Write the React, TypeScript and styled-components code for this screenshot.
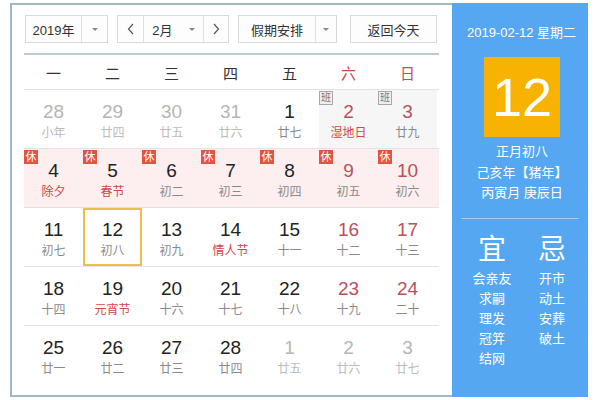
import React from "react"
import styled, { createGlobalStyle, css } from "styled-components"

const GlobalStyle = createGlobalStyle`
  html, body {
    margin: 0;
    padding: 0;
    background: #ffffff;
  }
  body {
    font-family: "Liberation Sans", "Noto Sans CJK SC", sans-serif;
    color: #333;
  }
`

type Tone = "normal" | "faded" | "weekend"
type Mark = "xiu" | "ban" | undefined

interface Day {
  n: number
  lunar: string
  tone?: Tone
  fest?: boolean
  mark?: Mark
  today?: boolean
}

const weeks: Array<Array<Day>> = [
  [
    { n: 28, lunar: "小年", tone: "faded" },
    { n: 29, lunar: "廿四", tone: "faded" },
    { n: 30, lunar: "廿五", tone: "faded" },
    { n: 31, lunar: "廿六", tone: "faded" },
    { n: 1, lunar: "廿七" },
    { n: 2, lunar: "湿地日", tone: "weekend", fest: true, mark: "ban" },
    { n: 3, lunar: "廿九", tone: "weekend", mark: "ban" }
  ],
  [
    { n: 4, lunar: "除夕", fest: true, mark: "xiu" },
    { n: 5, lunar: "春节", fest: true, mark: "xiu" },
    { n: 6, lunar: "初二", mark: "xiu" },
    { n: 7, lunar: "初三", mark: "xiu" },
    { n: 8, lunar: "初四", mark: "xiu" },
    { n: 9, lunar: "初五", tone: "weekend", mark: "xiu" },
    { n: 10, lunar: "初六", tone: "weekend", mark: "xiu" }
  ],
  [
    { n: 11, lunar: "初七" },
    { n: 12, lunar: "初八", today: true },
    { n: 13, lunar: "初九" },
    { n: 14, lunar: "情人节", fest: true },
    { n: 15, lunar: "十一" },
    { n: 16, lunar: "十二", tone: "weekend" },
    { n: 17, lunar: "十三", tone: "weekend" }
  ],
  [
    { n: 18, lunar: "十四" },
    { n: 19, lunar: "元宵节", fest: true },
    { n: 20, lunar: "十六" },
    { n: 21, lunar: "十七" },
    { n: 22, lunar: "十八" },
    { n: 23, lunar: "十九", tone: "weekend" },
    { n: 24, lunar: "二十", tone: "weekend" }
  ],
  [
    { n: 25, lunar: "廿一" },
    { n: 26, lunar: "廿二" },
    { n: 27, lunar: "廿三" },
    { n: 28, lunar: "廿四" },
    { n: 1, lunar: "廿五", tone: "faded" },
    { n: 2, lunar: "廿六", tone: "faded" },
    { n: 3, lunar: "廿七", tone: "faded" }
  ]
]

const weekdays = ["一", "二", "三", "四", "五", "六", "日"]
const yi = ["会亲友", "求嗣", "理发", "冠笄", "结网"]
const ji = ["开市", "动土", "安葬", "破土"]

const Frame = styled.div`
  box-sizing: border-box;
  margin: 3px 0 0 10px;
  width: 578px;
  height: 394px;
  border: 2px solid #a3b6c3;
  border-right: none;
  display: flex;
`

const Main = styled.div`
  flex: 1;
  padding: 10px 13px 0 12px;
  display: flex;
  flex-direction: column;
`

const Toolbar = styled.div`
  display: flex;
  height: 28px;
  padding-left: 1px;
`

const Box = styled.div<{ $w: number; $gap?: number }>`
  box-sizing: border-box;
  width: ${p => p.$w}px;
  margin-right: ${p => p.$gap ?? 0}px;
  height: 28px;
  border: 1px solid #d9d9d9;
  background: #fdfdfd;
  display: flex;
  align-items: stretch;
  font-size: 13px;
  color: #333;
`

const Part = styled.div<{ $w?: number; $line?: boolean }>`
  ${p =>
    p.$w
      ? css`
          width: ${p.$w}px;
          flex: none;
        `
      : css`
          flex: 1;
        `}
  display: flex;
  align-items: center;
  justify-content: center;
  border-left: ${p => (p.$line ? "1px solid #e0e0e0" : "none")};
`

const Caret = styled.span`
  width: 0;
  height: 0;
  border-left: 3px solid transparent;
  border-right: 3px solid transparent;
  border-top: 3px solid #888;
`

const Button = styled.div`
  box-sizing: border-box;
  width: 87px;
  height: 28px;
  border: 1px solid #d9d9d9;
  background: #fdfdfd;
  display: flex;
  align-items: center;
  justify-content: center;
  font-size: 13px;
  color: #333;
`

const Rule = styled.div`
  margin-top: 10px;
  height: 2px;
  background: #bccad2;
`

const Grid = styled.div`
  display: grid;
  grid-template-columns: repeat(7, 59px);
`

const HeadRow = styled(Grid)`
  height: 34px;
  align-items: center;
  border-bottom: 1px solid #e3e3e3;
  font-size: 15px;
`

const Head = styled.div<{ $red?: boolean }>`
  text-align: center;
  color: ${p => (p.$red ? "#c8484f" : "#333")};
`

const WeekRow = styled(Grid)<{ $holiday?: boolean }>`
  height: 58px;
  border-bottom: 1px solid #e3e3e3;
  background: ${p => (p.$holiday ? "#fdefef" : "transparent")};

  &:last-child {
    border-bottom: none;
  }
`

const Cell = styled.div<{ $today?: boolean; $work?: boolean }>`
  position: relative;
  box-sizing: border-box;
  display: flex;
  flex-direction: column;
  align-items: center;
  padding-top: 9px;
  background: ${p => (p.$work ? "#f6f6f6" : "transparent")};
  border: 2px solid ${p => (p.$today ? "#e6c24a" : "transparent")};
`

const toneColor: Record<Tone, string> = {
  normal: "#222",
  faded: "#b5b5b5",
  weekend: "#b8505a"
}

const Num = styled.div<{ $tone: Tone }>`
  font-size: 19px;
  line-height: 22px;
  color: ${p => toneColor[p.$tone]};
`

const Lunar = styled.div<{ $tone: Tone; $fest?: boolean }>`
  margin-top: 2px;
  font-size: 12px;
  line-height: 16px;
  color: ${p => (p.$fest ? "#d2454b" : p.$tone === "faded" ? "#bbb" : "#8a8a8a")};
`

const Badge = styled.span<{ $kind: "xiu" | "ban" }>`
  position: absolute;
  left: -2px;
  top: -1px;
  width: 14px;
  height: 14px;
  font-size: 11px;
  line-height: 14px;
  text-align: center;
  box-sizing: border-box;
  ${p =>
    p.$kind === "xiu"
      ? css`
          background: #e2543f;
          color: #fff;
        `
      : css`
          background: #eeeeee;
          color: #777;
          border: 1px solid #a8a8a8;
          line-height: 12px;
          font-size: 10px;
        `}
`

const Side = styled.div`
  width: 136px;
  margin-top: -2px;
  margin-bottom: -2px;
  background: #56a7f1;
  color: #fff;
  display: flex;
  flex-direction: column;
  align-items: center;
`

const DateLine = styled.div`
  margin-top: 21px;
  font-size: 13px;
  line-height: 18px;
  padding-left: 3px;
`

const BigDay = styled.div`
  margin-top: 15px;
  margin-left: 4px;
  width: 76px;
  height: 80px;
  background: #f8b201;
  display: flex;
  align-items: center;
  justify-content: center;
  font-size: 54px;
  line-height: 1;
`

const Info = styled.div`
  margin-top: 5px;
  font-size: 13px;
  line-height: 20.5px;
  text-align: center;
  padding-left: 4px;
`

const Divider = styled.div`
  margin-top: 14px;
  width: 118px;
  height: 1px;
  background: rgba(255, 255, 255, 0.45);
`

const Advice = styled.div`
  margin-top: 14px;
  display: flex;
  gap: 8px;
  padding-left: 4px;
`

const AdviceCol = styled.div`
  width: 52px;
  display: flex;
  flex-direction: column;
  align-items: center;
`

const AdviceTitle = styled.div`
  font-size: 28px;
  line-height: 34px;
  margin-bottom: 2px;
`

const AdviceItem = styled.div`
  font-size: 13px;
  line-height: 20px;
`

const Chevron = ({ dir }: { dir: "left" | "right" }) => (
  <svg width="8" height="12" viewBox="0 0 8 12">
    <path
      d={dir === "left" ? "M6 1 L1.5 6 L6 11" : "M2 1 L6.5 6 L2 11"}
      fill="none"
      stroke="#555"
      strokeWidth="1.2"
    />
  </svg>
)

const App = () => {
  return (
    <>
      <GlobalStyle />
      <Frame>
        <Main>
          <Toolbar>
            <Box $w={83} $gap={9}>
              <Part>2019年</Part>
              <Part $w={25} $line>
                <Caret />
              </Part>
            </Box>
            <Box $w={112} $gap={9}>
              <Part $w={25}>
                <Chevron dir="left" />
              </Part>
              <Part $line style={{ justifyContent: "space-around" }}>
                <span>2月</span>
                <Caret />
              </Part>
              <Part $w={24} $line>
                <Chevron dir="right" />
              </Part>
            </Box>
            <Box $w={99} $gap={13}>
              <Part>假期安排</Part>
              <Part $w={20} $line>
                <Caret />
              </Part>
            </Box>
            <Button>返回今天</Button>
          </Toolbar>
          <Rule />
          <HeadRow>
            {weekdays.map((d, i) => (
              <Head key={d} $red={i >= 5}>
                {d}
              </Head>
            ))}
          </HeadRow>
          {weeks.map((week, wi) => (
            <WeekRow key={wi} $holiday={wi === 1}>
              {week.map((day, di) => {
                const tone = day.tone ?? "normal"
                return (
                  <Cell key={di} $today={day.today} $work={day.mark === "ban"}>
                    {day.mark && (
                      <Badge $kind={day.mark}>{day.mark === "xiu" ? "休" : "班"}</Badge>
                    )}
                    <Num $tone={tone}>{day.n}</Num>
                    <Lunar $tone={tone} $fest={day.fest}>
                      {day.lunar}
                    </Lunar>
                  </Cell>
                )
              })}
            </WeekRow>
          ))}
        </Main>
        <Side>
          <DateLine>2019-02-12 星期二</DateLine>
          <BigDay>12</BigDay>
          <Info>
            正月初八
            <br />
            己亥年【猪年】
            <br />
            丙寅月 庚辰日
          </Info>
          <Divider />
          <Advice>
            <AdviceCol>
              <AdviceTitle>宜</AdviceTitle>
              {yi.map(t => (
                <AdviceItem key={t}>{t}</AdviceItem>
              ))}
            </AdviceCol>
            <AdviceCol>
              <AdviceTitle>忌</AdviceTitle>
              {ji.map(t => (
                <AdviceItem key={t}>{t}</AdviceItem>
              ))}
            </AdviceCol>
          </Advice>
        </Side>
      </Frame>
    </>
  )
}

export default App
